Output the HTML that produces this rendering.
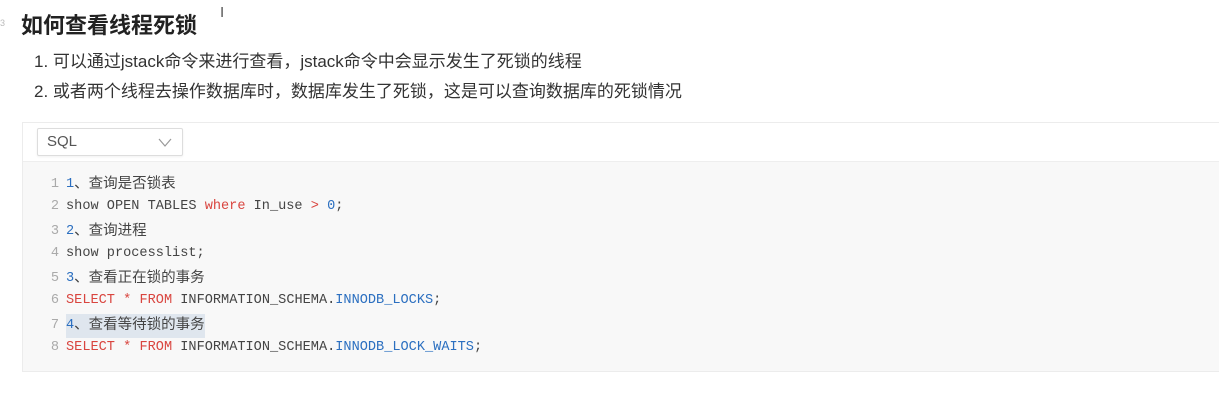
<!DOCTYPE html>
<html><head><meta charset="utf-8"><style>
body{margin:0;width:1219px;height:410px;background:#fff;position:relative;overflow:hidden;font-family:"Liberation Sans","Noto Sans CJK SC",sans-serif;color:#333}
.abs{position:absolute;white-space:nowrap}
h1{position:absolute;left:21px;top:8px;margin:0;font-size:22px;font-weight:bold;color:#222;font-family:"Liberation Sans","Noto Sans CJK SC",sans-serif}
.li{font-size:17px;color:#333}
.block{position:absolute;left:22px;top:122px;width:1200px;height:248px;border:1px solid #ececec;background:#f8f8f8}
.hdr{position:absolute;left:0;top:0;right:0;height:38px;background:#fff;border-bottom:1px solid #eee}
.sel{position:absolute;left:14px;top:5px;width:144px;height:26px;border:1px solid #ddd;border-radius:2px;background:#fff;box-shadow:0 1px 2px rgba(0,0,0,.06)}
.sel span{position:absolute;left:9px;top:4px;font-size:15px;color:#555}
.code{position:absolute;left:0;top:48px;font-family:"Liberation Mono","Noto Sans CJK SC",monospace;font-size:13.6px;color:#444}
.ln{position:absolute;left:0;height:23.6px;line-height:23.6px;white-space:nowrap}
.ln span{vertical-align:top;line-height:23.6px}
.n{display:inline-block;width:36px;text-align:right;color:#aaa;margin-right:7px}
.b{color:#2b6fc0}.r{color:#d9453f}.cn{font-family:"Liberation Sans","Noto Sans CJK SC",sans-serif;font-size:14.5px}
</style></head><body>
<div class="abs" style="left:0;top:18px;font-size:9px;color:#bbb">3</div>
<h1>如何查看线程死锁</h1>
<div class="abs" style="left:220px;top:4px;font-size:15px;color:#555">I</div>
<div class="abs li" style="left:34px;top:47px">1. 可以通过jstack命令来进行查看，jstack命令中会显示发生了死锁的线程</div>
<div class="abs li" style="left:34px;top:77px">2. 或者两个线程去操作数据库时，数据库发生了死锁，这是可以查询数据库的死锁情况</div>
<div class="block">
<div class="hdr"><div class="sel"><span>SQL</span><svg style="position:absolute;right:10px;top:9px" width="14" height="9"><path d="M1 1 L7 8 L13 1" fill="none" stroke="#999" stroke-width="1.2"/></svg></div></div>
<div class="code">
<div class="ln" style="top:1.5px"><span class="n">1</span><span class="b">1</span><span class="cn">、查询是否锁表</span></div>
<div class="ln" style="top:23.6px"><span class="n">2</span>show OPEN TABLES <span class="r">where</span> In_use <span class="r">&gt;</span> <span class="b">0</span>;</div>
<div class="ln" style="top:48.7px"><span class="n">3</span><span class="b">2</span><span class="cn">、查询进程</span></div>
<div class="ln" style="top:70.8px"><span class="n">4</span>show processlist;</div>
<div class="ln" style="top:95.9px"><span class="n">5</span><span class="b">3</span><span class="cn">、查看正在锁的事务</span></div>
<div class="ln" style="top:118px"><span class="n">6</span><span class="r">SELECT</span> <span class="r">*</span> <span class="r">FROM</span> INFORMATION_SCHEMA.<span class="b">INNODB_LOCKS</span>;</div>
<div class="ln" style="top:143.1px"><span class="n">7</span><span style="background:#dfe6ee;display:inline-block"><span class="b">4</span><span class="cn">、查看等待锁的事务</span></span></div>
<div class="ln" style="top:165.2px"><span class="n">8</span><span class="r">SELECT</span> <span class="r">*</span> <span class="r">FROM</span> INFORMATION_SCHEMA.<span class="b">INNODB_LOCK_WAITS</span>;</div>
</div>
</div>
</body></html>
